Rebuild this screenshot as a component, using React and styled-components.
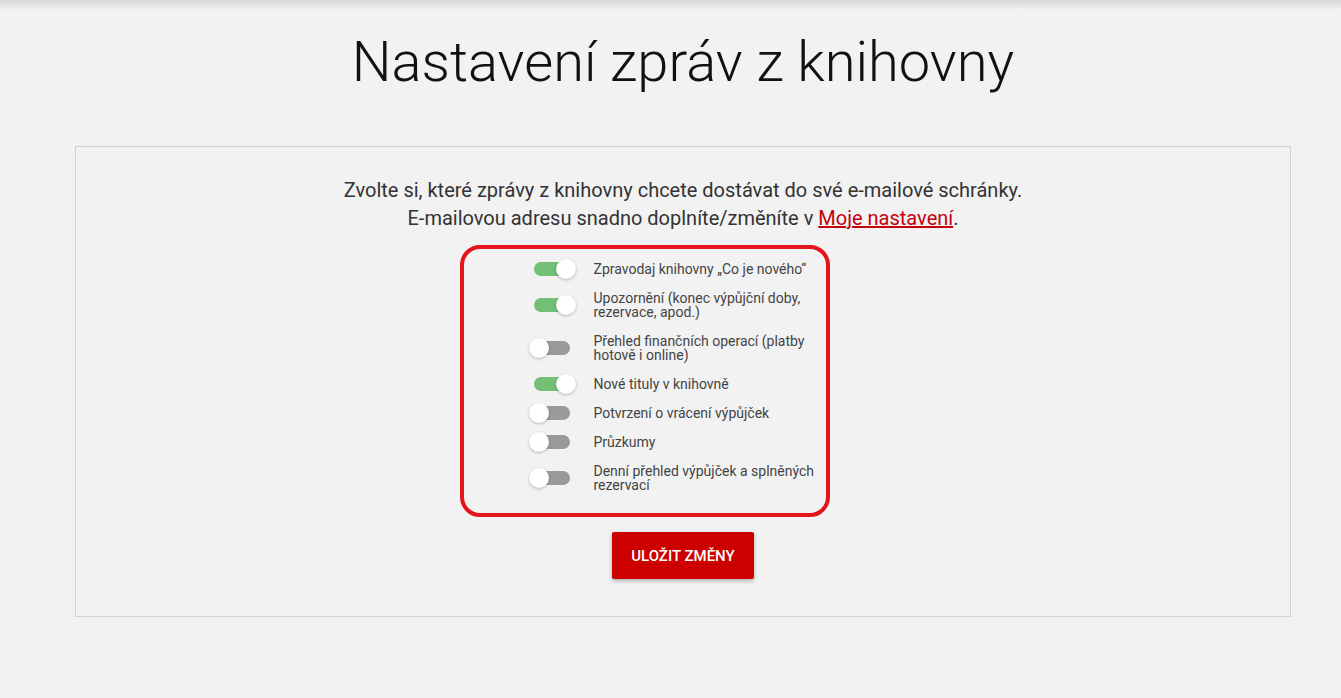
import React, { useState } from "react";
import styled, { createGlobalStyle } from "styled-components";

const Global = createGlobalStyle`
  html, body { margin: 0; padding: 0; }
  body {
    background: linear-gradient(#d6d6d6 0px, #f2f2f2 10px) no-repeat, #f2f2f2;
    background-color: #f2f2f2;
    font-family: Roboto, "Liberation Sans", sans-serif;
    min-height: 698px;
  }
`;

const Page = styled.main`
  display: flex;
  flex-direction: column;
  padding-top: 27px;
`;

const Title = styled.h1`
  margin: 0 0 49px 75px;
  width: 1216px;
  text-align: center;
  font-family: Roboto, sans-serif;
  font-weight: 300;
  font-size: 56px;
  line-height: 70px;
  color: #111;
`;

const Card = styled.section`
  margin-left: 75px;
  width: 1214px;
  border: 1px solid #d2d2d2;
  display: flex;
  flex-direction: column;
  align-items: center;
  padding: 29px 0 37px;
`;

const Intro = styled.p`
  margin: 0;
  text-align: center;
  font-size: 20px;
  line-height: 28px;
  color: #333;
`;

const Link = styled.a`
  color: #c4000d;
  text-decoration: underline;
`;

const ListBox = styled.div`
  margin-top: 13px;
  margin-right: 77px;
  width: 362px;
  box-sizing: content-box;
  border: 4px solid #e3161e;
  border-radius: 20px;
  padding: 5.5px 0 13.5px;
  display: flex;
  flex-direction: column;
`;

const Row = styled.label`
  display: grid;
  grid-template-columns: 36px 228px;
  column-gap: 24px;
  align-items: center;
  padding: 7.5px 0 7.5px 70px;
  cursor: pointer;
`;

const Track = styled.span`
  position: relative;
  display: block;
  width: 36px;
  height: 14px;
  border-radius: 7px;
  background: ${(p) => (p.$on ? "#72bf76" : "#9a9a9a")};
`;

const Knob = styled.span`
  position: absolute;
  top: -3px;
  left: ${(p) => (p.$on ? "22px" : "-5px")};
  width: 20px;
  height: 20px;
  border-radius: 50%;
  background: #fff;
  box-shadow: 0 1px 3px rgba(0, 0, 0, 0.25);
`;

const LabelText = styled.span`
  font-size: 14px;
  line-height: 14px;
  color: #444;
`;

const SaveButton = styled.button`
  margin-top: 15px;
  height: 47px;
  padding: 0 19px;
  border: none;
  border-radius: 2px;
  background: #cc0000;
  color: #fff;
  font-family: Roboto, sans-serif;
  font-weight: 500;
  font-size: 15px;
  text-transform: uppercase;
  box-shadow: 0 2px 4px rgba(0, 0, 0, 0.28);
  cursor: pointer;
`;

const items = [
  ["Zpravodaj knihovny „Co je nového“", true],
  ["Upozornění (konec výpůjční doby, rezervace, apod.)", true],
  ["Přehled finančních operací (platby hotově i online)", false],
  ["Nové tituly v knihovně", true],
  ["Potvrzení o vrácení výpůjček", false],
  ["Průzkumy", false],
  ["Denní přehled výpůjček a splněných rezervací", false],
];

export default function App() {
  const [state, setState] = useState(items.map((i) => i[1]));
  return (
    <>
      <Global />
      <Page>
        <Title>Nastavení zpráv z knihovny</Title>
        <Card>
          <Intro>
            Zvolte si, které zprávy z knihovny chcete dostávat do své e-mailové schránky.
            <br />
            E-mailovou adresu snadno doplníte/změníte v <Link href="#">Moje nastavení</Link>.
          </Intro>
          <ListBox>
            {items.map(([text], i) => (
              <Row
                key={i}
                onClick={() => setState((s) => s.map((v, j) => (j === i ? !v : v)))}
              >
                <Track $on={state[i]}>
                  <Knob $on={state[i]} />
                </Track>
                <LabelText>{text}</LabelText>
              </Row>
            ))}
          </ListBox>
          <SaveButton>Uložit změny</SaveButton>
        </Card>
      </Page>
    </>
  );
}
